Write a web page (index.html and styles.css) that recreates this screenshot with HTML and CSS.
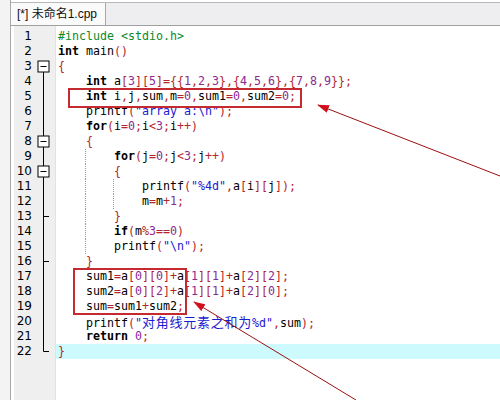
FILE: index.html
```html
<!DOCTYPE html>
<html lang="zh">
<head>
	<meta charset="UTF-8">
	<title>未命名1.cpp</title>
	<link rel="stylesheet" href="styles.css">
</head>
<body>
	<div class="app">
		<div class="side"></div>
		<div class="main">
			<div class="tabbar">
				<div class="tab">[*] 未命名1.cpp</div>
			</div>
			<div class="editor">
				<div class="gutter">
					<ul class="nums">
						<li>1</li><li>2</li><li>3</li><li>4</li><li>5</li><li>6</li><li>7</li><li>8</li><li>9</li><li>10</li><li>11</li>
						<li>12</li><li>13</li><li>14</li><li>15</li><li>16</li><li>17</li><li>18</li><li>19</li><li>20</li><li>21</li><li>22</li>
					</ul>
					<!-- 折叠标记 -->
					<svg class="folds" width="18" height="330" viewBox="0 0 18 330">
						<g stroke="#000" stroke-width="1" fill="none">
							<path d="M6.5 43 V322.5 H12"/>
							<path d="M6.5 187.5 H12"/>
							<path d="M6.5 232.5 H12"/>
						</g>
						<g stroke="#000" stroke-width="1" fill="#fff">
							<rect x="1" y="32" width="11" height="11"/>
							<rect x="1" y="107" width="11" height="11"/>
							<rect x="1" y="137" width="11" height="11"/>
						</g>
						<g stroke="#000" stroke-width="1">
							<path d="M3.5 37.5 H9.5"/>
							<path d="M3.5 112.5 H9.5"/>
							<path d="M3.5 142.5 H9.5"/>
						</g>
					</svg>
				</div>
				<div class="code">
					<div class="ln"><span class="pp">#include &lt;stdio.h&gt;</span></div>
					<div class="ln"><span class="kw">int</span> main<span class="op">()</span></div>
					<div class="ln"><span class="op">{</span></div>
					<div class="ln">    <span class="kw">int</span> a<span class="op">[</span><span class="num">3</span><span class="op">][</span><span class="num">5</span><span class="op">]={{</span><span class="num">1</span><span class="op">,</span><span class="num">2</span><span class="op">,</span><span class="num">3</span><span class="op">},{</span><span class="num">4</span><span class="op">,</span><span class="num">5</span><span class="op">,</span><span class="num">6</span><span class="op">},{</span><span class="num">7</span><span class="op">,</span><span class="num">8</span><span class="op">,</span><span class="num">9</span><span class="op">}};</span></div>
					<div class="ln">    <span class="kw">int</span> i<span class="op">,</span>j<span class="op">,</span>sum<span class="op">,</span>m<span class="op">=</span><span class="num">0</span><span class="op">,</span>sum1<span class="op">=</span><span class="num">0</span><span class="op">,</span>sum2<span class="op">=</span><span class="num">0</span><span class="op">;</span></div>
					<div class="ln">    printf<span class="op">(</span><span class="str">"array a:\n"</span><span class="op">);</span></div>
					<div class="ln">    <span class="kw">for</span><span class="op">(</span>i<span class="op">=</span><span class="num">0</span><span class="op">;</span>i<span class="op">&lt;</span><span class="num">3</span><span class="op">;</span>i<span class="op">++)</span></div>
					<div class="ln">    <span class="op">{</span></div>
					<div class="ln">    <span class="guide"></span>    <span class="kw">for</span><span class="op">(</span>j<span class="op">=</span><span class="num">0</span><span class="op">;</span>j<span class="op">&lt;</span><span class="num">3</span><span class="op">;</span>j<span class="op">++)</span></div>
					<div class="ln">    <span class="guide"></span>    <span class="op">{</span></div>
					<div class="ln">    <span class="guide"></span>    <span class="guide"></span>    printf<span class="op">(</span><span class="str">"%4d"</span><span class="op">,</span>a<span class="op">[</span>i<span class="op">][</span>j<span class="op">]);</span></div>
					<div class="ln">    <span class="guide"></span>    <span class="guide"></span>    m<span class="op">=</span>m<span class="op">+</span><span class="num">1</span><span class="op">;</span></div>
					<div class="ln">    <span class="guide"></span>    <span class="op">}</span></div>
					<div class="ln">    <span class="guide"></span>    <span class="kw">if</span><span class="op">(</span>m<span class="op">%</span><span class="num">3</span><span class="op">==</span><span class="num">0</span><span class="op">)</span></div>
					<div class="ln">    <span class="guide"></span>    printf<span class="op">(</span><span class="str">"\n"</span><span class="op">);</span></div>
					<div class="ln">    <span class="op">}</span></div>
					<div class="ln">    sum1<span class="op">=</span>a<span class="op">[</span><span class="num">0</span><span class="op">][</span><span class="num">0</span><span class="op">]+</span>a<span class="op">[</span><span class="num">1</span><span class="op">][</span><span class="num">1</span><span class="op">]+</span>a<span class="op">[</span><span class="num">2</span><span class="op">][</span><span class="num">2</span><span class="op">];</span></div>
					<div class="ln">    sum2<span class="op">=</span>a<span class="op">[</span><span class="num">0</span><span class="op">][</span><span class="num">2</span><span class="op">]+</span>a<span class="op">[</span><span class="num">1</span><span class="op">][</span><span class="num">1</span><span class="op">]+</span>a<span class="op">[</span><span class="num">2</span><span class="op">][</span><span class="num">0</span><span class="op">];</span></div>
					<div class="ln">    sum<span class="op">=</span>sum1<span class="op">+</span>sum2<span class="op">;</span></div>
					<div class="ln">    printf<span class="op">(</span><span class="str">"<span class="cjk">对角线元素之和为</span>%d"</span><span class="op">,</span>sum<span class="op">);</span></div>
					<div class="ln">    <span class="kw">return</span> <span class="num">0</span><span class="op">;</span></div>
					<div class="ln cur"><span class="op">}</span></div>
				</div>
			</div>
		</div>
	</div>

	<!-- 标注：红框和箭头 -->
	<svg class="marks" width="500" height="400" viewBox="0 0 500 400">
		<defs>
			<marker id="head" markerUnits="userSpaceOnUse" markerWidth="12" markerHeight="8" refX="11" refY="4" orient="auto">
				<path d="M0 0 L12 4 L0 8 Z" fill="#d0101a"/>
			</marker>
		</defs>
		<g fill="none" stroke="#c42a30" stroke-width="2">
			<rect x="69" y="89" width="232" height="18"/>
			<rect x="74" y="269" width="112" height="45"/>
		</g>
		<g stroke="#9a1010" stroke-width="1">
			<line x1="500" y1="176" x2="318" y2="105" marker-end="url(#head)"/>
			<line x1="356" y1="400" x2="194" y2="302" marker-end="url(#head)"/>
		</g>
	</svg>
</body>
</html>
```

FILE: styles.css
```css
* {
	margin: 0;
	padding: 0;
}
li {
	list-style: none;
}
html,body {
	height: 100%;
}
body {
	position: relative;
	width: 500px;
	height: 400px;
	overflow: hidden;
	background: #fff;
	font-family: "DejaVu Sans Mono", monospace;
}
.app {
	display: flex;
	height: 100%;
}
.side {
	width: 10px;
	background: #f3f3f3;
	border-right: 1px solid #a8a8a8;
}
.main {
	flex: 1;
	display: flex;
	flex-direction: column;
	min-width: 0;
}
.tabbar {
	display: flex;
	height: 22px;
	margin-top: 2px;
	background: #eeeef1;
	border-top: 1px solid #b8b8b8;
	border-bottom: 1px solid #a0a0a0;
}
.tab {
	height: 22px;
	padding: 0 8px 0 6px;
	background: #fafafa;
	border-right: 1px solid #a8a8a8;
	color: #111;
	font-family: "Liberation Sans", "Noto Sans CJK SC", sans-serif;
	font-size: 12px;
	line-height: 22px;
}
.editor {
	flex: 1;
	display: flex;
	padding-left: 3px;
}
.gutter {
	display: flex;
	width: 41px;
	padding-top: 3px;
	background: #efefef;
	border-right: 1px solid #e2e2e2;
}
.nums {
	width: 23px;
	padding-right: 5px;
	color: #000;
	font-family: "DejaVu Sans", sans-serif;
	font-size: 12px;
	line-height: 15px;
	text-align: right;
}
.nums li {
	height: 15px;
}
.folds {
	display: block;
	flex: none;
}
.code {
	flex: 1;
	padding-top: 3px;
	color: #000;
	font-size: 11.63px;
	line-height: 15px;
}
.ln {
	height: 15px;
	padding-left: 2px;
	white-space: pre;
}
.ln.cur {
	background: #cdfafd;
}
.kw {
	font-weight: bold;
}
.op {
	color: #b3262b;
}
.num {
	color: #8a2a96;
}
.str {
	color: #1a1ad0;
}
.pp {
	color: #0b8a2a;
}
.cjk {
	font-family: "Noto Sans CJK SC", sans-serif;
	font-size: 13px;
	letter-spacing: 0.75px;
}
.guide {
	display: inline-block;
	width: 0;
	height: 15px;
	vertical-align: top;
	border-left: 1px dotted #999;
	margin-left: -1px;
}
.marks {
	position: absolute;
	top: 0;
	left: 0;
	pointer-events: none;
}
```
